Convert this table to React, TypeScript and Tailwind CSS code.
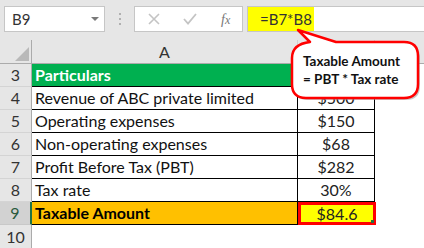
export default function App() {
  const rows = [
    { n: "3", label: "Particulars", value: "", kind: "head" },
    { n: "4", label: "Revenue of ABC private limited", value: "$500", kind: "row" },
    { n: "5", label: "Operating expenses", value: "$150", kind: "row" },
    { n: "6", label: "Non-operating expenses", value: "$68", kind: "row" },
    { n: "7", label: "Profit Before Tax (PBT)", value: "$282", kind: "row" },
    { n: "8", label: "Tax rate", value: "30%", kind: "row" },
    { n: "9", label: "Taxable Amount", value: "$84.6", kind: "total" },
  ];

  return (
    <div className="relative w-[424px] h-[248px] overflow-hidden bg-white font-['Lato',sans-serif] text-[#222]">
      {/* Toolbar */}
      <div className="flex h-[40px] bg-[#e6e6e6] pt-[6px] pl-[4px]">
        <div className="flex h-[26px] w-[101px] items-center justify-between border border-[#c6c6c6] bg-white pl-[7px] pr-[5px] text-[15px] text-[#333]">
          <span>B9</span>
          <svg width="8" height="5" viewBox="0 0 8 5">
            <polygon points="0,0 8,0 4,4" fill="#7a7a7a" />
          </svg>
        </div>
        <div className="ml-[14px] mr-[13px] flex flex-col gap-[3px] pt-[7px]">
          <div className="h-[2px] w-[2px] bg-[#b0b0b0]" />
          <div className="h-[2px] w-[2px] bg-[#b0b0b0]" />
          <div className="h-[2px] w-[2px] bg-[#b0b0b0]" />
        </div>
        <div className="flex h-[26px] w-[109px] items-center border border-[#c6c6c6] bg-white">
          <svg className="ml-[13px]" width="12" height="12" viewBox="0 0 12 12">
            <path d="M1 1 L11 11 M11 1 L1 11" stroke="#c4c4c4" strokeWidth="1.6" />
          </svg>
          <svg className="ml-[23px]" width="14" height="12" viewBox="0 0 14 12">
            <path d="M1 6 L5 10.5 L13 1" stroke="#c4c4c4" strokeWidth="1.8" fill="none" />
          </svg>
          <span className="ml-[24px] font-['Liberation_Serif',serif] text-[14px] italic text-[#777]">
            f<span className="text-[12px]">x</span>
          </span>
        </div>
        <div className="ml-[4px] flex h-[26px] flex-1 items-center border border-[#c6c6c6] border-r-0 bg-white">
          <div className="flex h-[24px] w-[66px] items-center bg-[#ffff00] pl-[12px] text-[15px] text-[#333]">
            =B7*B8
          </div>
        </div>
      </div>

      {/* Column headers */}
      <div className="flex h-[24px] border-b border-[#ababab] bg-[#e6e6e6]">
        <div className="relative w-[32px] border-r border-[#ababab]">
          <svg className="absolute left-[14px] top-[6px]" width="16" height="16" viewBox="0 0 16 16">
            <polygon points="15,1 15,15 1,15" fill="#b9b9b9" />
          </svg>
        </div>
        <div className="flex w-[266px] items-center justify-center border-r border-[#d0d0d0] text-[16px] text-[#333]">
          A
        </div>
        <div className="w-[77px] border-r border-[#d0d0d0]" />
        <div className="flex-1" />
      </div>

      {/* Rows */}
      {rows.map((r) => (
        <div key={r.n} className="flex h-[23px]">
          <div
            className={
              r.kind === "total"
                ? "flex w-[32px] items-center justify-center border-b border-r-2 border-b-[#c8c8c8] border-r-[#217346] bg-[#d2d2d2] text-[16px] text-[#2a5a3c]"
                : "flex w-[32px] items-center justify-center border-b border-r border-b-[#d4d4d4] border-r-[#ababab] bg-[#e6e6e6] text-[16px] text-[#333]"
            }
          >
            {r.n}
          </div>
          <div
            className={
              r.kind === "head"
                ? "flex w-[266px] items-center border-b border-r border-black bg-[#00b050] pl-[3px] text-[16px] font-bold text-white"
                : r.kind === "total"
                  ? "flex w-[266px] items-center border-b border-r border-black bg-[#ffc000] pl-[3px] text-[16px] font-bold text-black"
                  : "flex w-[266px] items-center border-b border-r border-black pl-[3px] text-[16px] text-[#111]"
            }
          >
            {r.label}
          </div>
          <div
            className={
              r.kind === "head"
                ? "w-[77px] border-b border-r border-black bg-[#00b050]"
                : r.kind === "total"
                  ? "relative flex w-[78px] items-center justify-center border-[3px] border-[#ff0000] bg-[#ffff00] text-[16px] text-[#222]"
                  : "flex w-[77px] items-center justify-center border-b border-r border-black text-[16px] text-[#222]"
            }
          >
            {r.value}
            {r.kind === "total" && (
              <div className="absolute bottom-[-1px] right-[-1px] h-[3px] w-[3px] bg-[#217346]" />
            )}
          </div>
          <div className="flex-1" />
        </div>
      ))}
      <div className="flex h-[23px]">
        <div className="flex w-[32px] items-center justify-center border-r border-[#ababab] bg-[#e6e6e6] text-[16px] text-[#333]">
          10
        </div>
        <div className="flex-1" />
      </div>

      {/* Callout */}
      <svg className="pointer-events-none absolute left-0 top-0" width="424" height="248" viewBox="0 0 424 248">
        <path
          d="M298 30 L336 42 L404 42 Q418 42 418 56 L418 84 Q418 98 404 98 L306 98 Q292 98 292 84 L292 58 Q292 44 310 42 Z"
          fill="#9a9a9a"
          opacity="0.55"
          transform="translate(2 2)"
        />
        <path
          d="M298 30 L336 42 L404 42 Q418 42 418 56 L418 84 Q418 98 404 98 L306 98 Q292 98 292 84 L292 58 Q292 44 310 42 Z"
          fill="#ffffff"
          stroke="#ff0000"
          strokeWidth="2.5"
          strokeLinejoin="round"
        />
      </svg>
      <div className="absolute left-[303px] top-[52px] text-[13.5px] font-bold leading-[18px] text-[#111]">
        <div>Taxable Amount</div>
        <div>= PBT * Tax rate</div>
      </div>
    </div>
  );
}
